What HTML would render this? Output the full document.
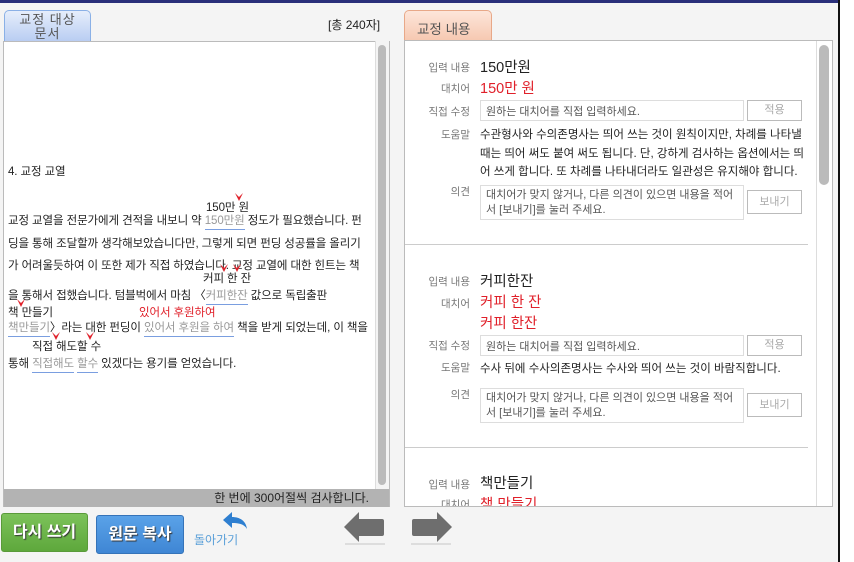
<!DOCTYPE html>
<html><head><meta charset="utf-8"><style>
*{margin:0;padding:0;box-sizing:border-box}
body{width:854px;height:562px;background:#f4f4f4;font-family:"Liberation Sans","Noto Sans CJK KR",sans-serif;position:relative;overflow:hidden;color:#222}
.a{position:absolute;white-space:nowrap}
.t{font-size:11.5px;letter-spacing:-0.1px}
.g{color:#999}
.u{border-bottom:1px solid #7a9ee0;padding-bottom:2px}
.r{color:#e0202a}
.v{position:absolute}
.lab{position:absolute;font-size:10.5px;color:#777;text-align:right;width:60px;left:410px}
.inp{position:absolute;left:480px;width:264px;border:1px solid #ddd;background:#fff;font-size:11px;color:#555;padding:2px 5px}
.btn{position:absolute;left:747px;width:55px;border:1px solid #bbb;background:#fff;font-size:11px;color:#aaa;text-align:center}
</style></head><body>
<div class="a" style="left:0;top:0;width:854px;height:3px;background:#2a2f7a"></div>
<div class="a" style="left:838px;top:0;width:2px;height:562px;background:#111"></div>
<div class="a" style="left:840px;top:0;width:14px;height:562px;background:#fff"></div>

<div class="a" style="left:4px;top:10px;width:87px;height:31px;border:1px solid #8ab0e6;border-bottom:none;border-radius:5px 5px 0 0;background:linear-gradient(#e6eefb,#b9cdf2);font-size:13px;letter-spacing:1px;color:#555;text-align:center;line-height:14px;padding-top:2px;overflow:hidden">교정 대상<br>문서</div>
<div class="a" style="left:328px;top:16px;font-size:12px">[총 240자]</div>
<div class="a" style="left:3px;top:41px;width:387px;height:466px;border:1px solid #bbb;background:#fff"></div>
<div class="a" style="left:375px;top:41px;width:14px;height:448px;background:#f4f4f4;border-left:1px solid #ddd"></div>
<div class="a" style="left:378px;top:45px;width:8px;height:440px;background:#bbb;border-radius:4px"></div>
<div class="a" style="left:4px;top:489px;width:385px;height:18px;background:#b3b3b3;font-size:12px;text-align:right;padding-right:20px;line-height:18px">한 번에 300어절씩 검사합니다.</div>

<svg width="0" height="0" style="position:absolute"><defs><path id="ck" d="M0 0 L4 8 L8 0 L4 4 Z" fill="#e0202a"/></defs></svg>

<div class="a t" style="left:8px;top:163px">4. 교정 교열</div>
<div class="a t" style="left:206px;top:199px">150만 원</div><svg class="v" style="left:235px;top:193px" width="8" height="8"><use href="#ck"/></svg>
<div class="a t" style="left:8px;top:212px">교정 교열을 전문가에게 견적을 내보니 약 <span class="g u">150만원</span> 정도가 필요했습니다. 펀</div>
<div class="a t" style="left:8px;top:235px">딩을 통해 조달할까 생각해보았습니다만, 그렇게 되면 펀딩 성공률을 올리기</div>
<div class="a t" style="left:8px;top:257px">가 어려울듯하여 이 또한 제가 직접 하였습니다. 교정 교열에 대한 힌트는 책</div>
<div class="a t" style="left:203px;top:270px">커피 한 잔</div><svg class="v" style="left:220px;top:264px" width="8" height="8"><use href="#ck"/></svg><svg class="v" style="left:233px;top:264px" width="8" height="8"><use href="#ck"/></svg>
<div class="a t" style="left:8px;top:287px">을 통해서 접했습니다. 텀블벅에서 마침 〈<span class="g u">커피한잔</span> 값으로 독립출판</div>
<div class="a t" style="left:8px;top:304px">책 만들기</div><svg class="v" style="left:17px;top:299px" width="8" height="8"><use href="#ck"/></svg>
<div class="a t r" style="left:139px;top:304px">있어서 후원하여</div>
<div class="a t" style="left:8px;top:319px"><span class="g u">책만들기</span>〉라는 대한 펀딩이 <span class="g u">있어서 후원을 하여</span> 책을 받게 되었는데, 이 책을</div>
<div class="a t" style="left:32px;top:338px">직접 해도할 수</div><svg class="v" style="left:52px;top:332px" width="8" height="8"><use href="#ck"/></svg><svg class="v" style="left:86px;top:332px" width="8" height="8"><use href="#ck"/></svg>
<div class="a t" style="left:8px;top:355px">통해 <span class="g u">직접해도</span> <span class="g u">할수</span> 있겠다는 용기를 얻었습니다.</div>

<div class="a" style="left:404px;top:10px;width:88px;height:31px;border:1px solid #e8a888;border-bottom:none;border-radius:5px 5px 0 0;background:linear-gradient(#fde6da,#f6c8b0);font-size:13.5px;color:#555;padding:7px 0 0 12px">교정 내용</div>
<div class="a" style="left:404px;top:40px;width:429px;height:467px;border:1px solid #bbb;background:#fff"></div>
<div class="a" style="left:819px;top:45px;width:10px;height:140px;background:#bbb;border-radius:5px"></div>
<div class="a" style="left:816px;top:41px;width:1px;height:465px;background:#ddd"></div>

<div class="lab" style="top:60px">입력 내용</div><div class="a" style="left:480px;top:56px;font-size:14.5px">150만원</div>
<div class="lab" style="top:81px">대치어</div><div class="a r" style="left:480px;top:77px;font-size:14.5px">150만 원</div>
<div class="lab" style="top:104px">직접 수정</div><div class="inp" style="top:100px;height:21px">원하는 대치어를 직접 입력하세요.</div><div class="btn" style="top:100px;height:21px;line-height:19px">적용</div>
<div class="lab" style="top:127px">도움말</div>
<div class="a" style="left:480px;top:126px;font-size:11.5px;line-height:18.5px;white-space:normal;width:325px">수관형사와 수의존명사는 띄어 쓰는 것이 원칙이지만, 차례를 나타낼 때는 띄어 써도 붙여 써도 됩니다. 단, 강하게 검사하는 옵션에서는 띄어 쓰게 합니다. 또 차례를 나타내더라도 일관성은 유지해야 합니다.</div>
<div class="lab" style="top:184px">의견</div><div class="inp" style="top:185px;height:35px;white-space:normal;line-height:15px">대치어가 맞지 않거나, 다른 의견이 있으면 내용을 적어서 [보내기]를 눌러 주세요.</div><div class="btn" style="top:190px;height:24px;line-height:22px">보내기</div>
<div class="a" style="left:405px;top:244px;width:403px;height:1px;background:#ccc"></div>

<div class="lab" style="top:274px">입력 내용</div><div class="a" style="left:480px;top:270px;font-size:14.5px">커피한잔</div>
<div class="lab" style="top:296px">대치어</div><div class="a r" style="left:480px;top:291px;font-size:14.5px">커피 한 잔</div>
<div class="a r" style="left:480px;top:312px;font-size:14.5px">커피 한잔</div>
<div class="lab" style="top:338px">직접 수정</div><div class="inp" style="top:335px;height:21px">원하는 대치어를 직접 입력하세요.</div><div class="btn" style="top:335px;height:21px;line-height:19px">적용</div>
<div class="lab" style="top:360px">도움말</div><div class="a" style="left:480px;top:360px;font-size:11.5px">수사 뒤에 수사의존명사는 수사와 띄어 쓰는 것이 바람직합니다.</div>
<div class="lab" style="top:387px">의견</div><div class="inp" style="top:388px;height:35px;white-space:normal;line-height:15px">대치어가 맞지 않거나, 다른 의견이 있으면 내용을 적어서 [보내기]를 눌러 주세요.</div><div class="btn" style="top:393px;height:24px;line-height:22px">보내기</div>
<div class="a" style="left:405px;top:447px;width:403px;height:1px;background:#ccc"></div>
<div class="lab" style="top:477px">입력 내용</div><div class="a" style="left:480px;top:472px;font-size:14.5px">책만들기</div>
<div class="a" style="left:405px;top:495px;width:410px;height:11px;overflow:hidden"><div class="a r" style="left:75px;top:-2px;font-size:14.5px">책 만들기</div><div class="a" style="left:5px;top:2px;font-size:10.5px;color:#777;width:60px;text-align:right">대치어</div></div>

<div class="a" style="left:1px;top:513px;width:87px;height:39px;background:linear-gradient(#7cc25a,#5ea83c);border:1px solid #5a9a3a;border-radius:3px;color:#fff;font-size:16px;font-weight:bold;text-align:center;line-height:37px;text-shadow:1px 1px 1px #333">다시 쓰기</div>
<div class="a" style="left:96px;top:515px;width:88px;height:39px;background:linear-gradient(#5aa2e8,#3f86d4);border:1px solid #3573b8;border-radius:3px;color:#fff;font-size:16px;font-weight:bold;text-align:center;line-height:37px;text-shadow:1px 1px 1px #333">원문 복사</div>
<svg class="a" style="left:220px;top:511px" width="30" height="22"><path d="M3 9 L12 1 L12 6 C20 6 26 10 27 18 C24 13 19 12 12 12 L12 17 Z" fill="#2e7fd0"/></svg>
<div class="a" style="left:194px;top:531px;font-size:12px;color:#5a9fd8">돌아가기</div>
<svg class="a" style="left:340px;top:510px" width="50" height="38"><path d="M4 17 L19 2 L19 9 L42 9 Q44 9 44 11 L44 24 Q44 26 42 26 L19 26 L19 32 Z" fill="#6e6e6e"/><rect x="5" y="33" width="40" height="2" fill="#ddd"/></svg>
<svg class="a" style="left:406px;top:510px" width="50" height="38"><path d="M46 17 L31 2 L31 9 L8 9 Q6 9 6 11 L6 24 Q6 26 8 26 L31 26 L31 32 Z" fill="#6e6e6e"/><rect x="5" y="33" width="40" height="2" fill="#ddd"/></svg>
</body></html>
